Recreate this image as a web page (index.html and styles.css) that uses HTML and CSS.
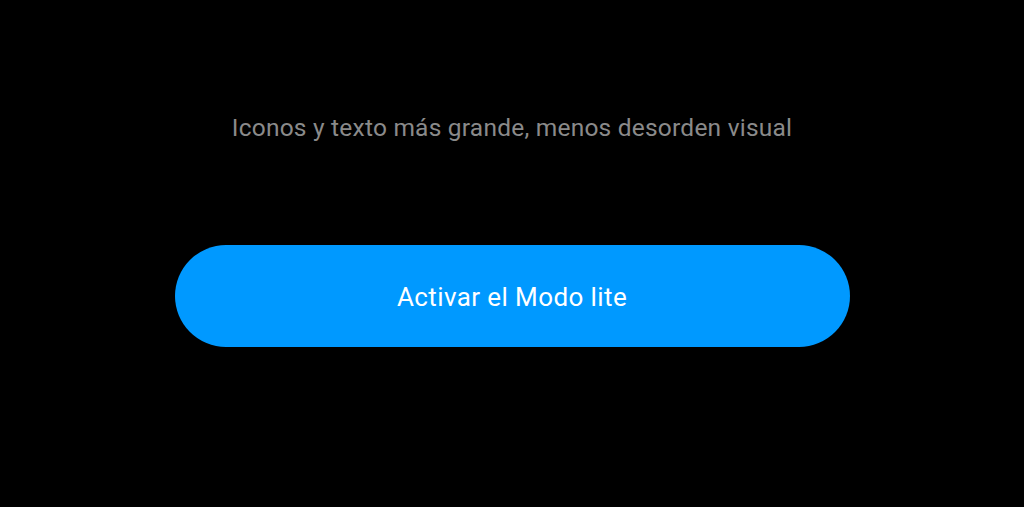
FILE: index.html
```html
<!DOCTYPE html>
<html lang="es">
<head>
<meta charset="utf-8">
<link rel="stylesheet" href="styles.css">
</head>
<body>
<main class="screen">
  <p class="subtitle">Iconos y texto más grande, menos desorden visual</p>
  <button class="cta">Activar el Modo lite</button>
</main>
</body>
</html>
```
FILE: styles.css
```css
html, body {
  margin: 0;
  padding: 0;
  background: #000;
  height: 100%;
}
.screen {
  display: flex;
  flex-direction: column;
  align-items: center;
  padding-top: 114px;
  font-family: Roboto, "Noto Sans", sans-serif;
}
.subtitle {
  margin: 0;
  font-size: 24.5px;
  line-height: 28px;
  letter-spacing: 0.22px;
  color: #8a8a8a;
}
.cta {
  margin-top: 103px;
  width: 675px;
  height: 102px;
  border: none;
  border-radius: 51px;
  background: #0099ff;
  color: #fff;
  font-family: Roboto, "Noto Sans", sans-serif;
  font-size: 26px;
  letter-spacing: 0.4px;
  padding: 2px 0 0;
}
```
